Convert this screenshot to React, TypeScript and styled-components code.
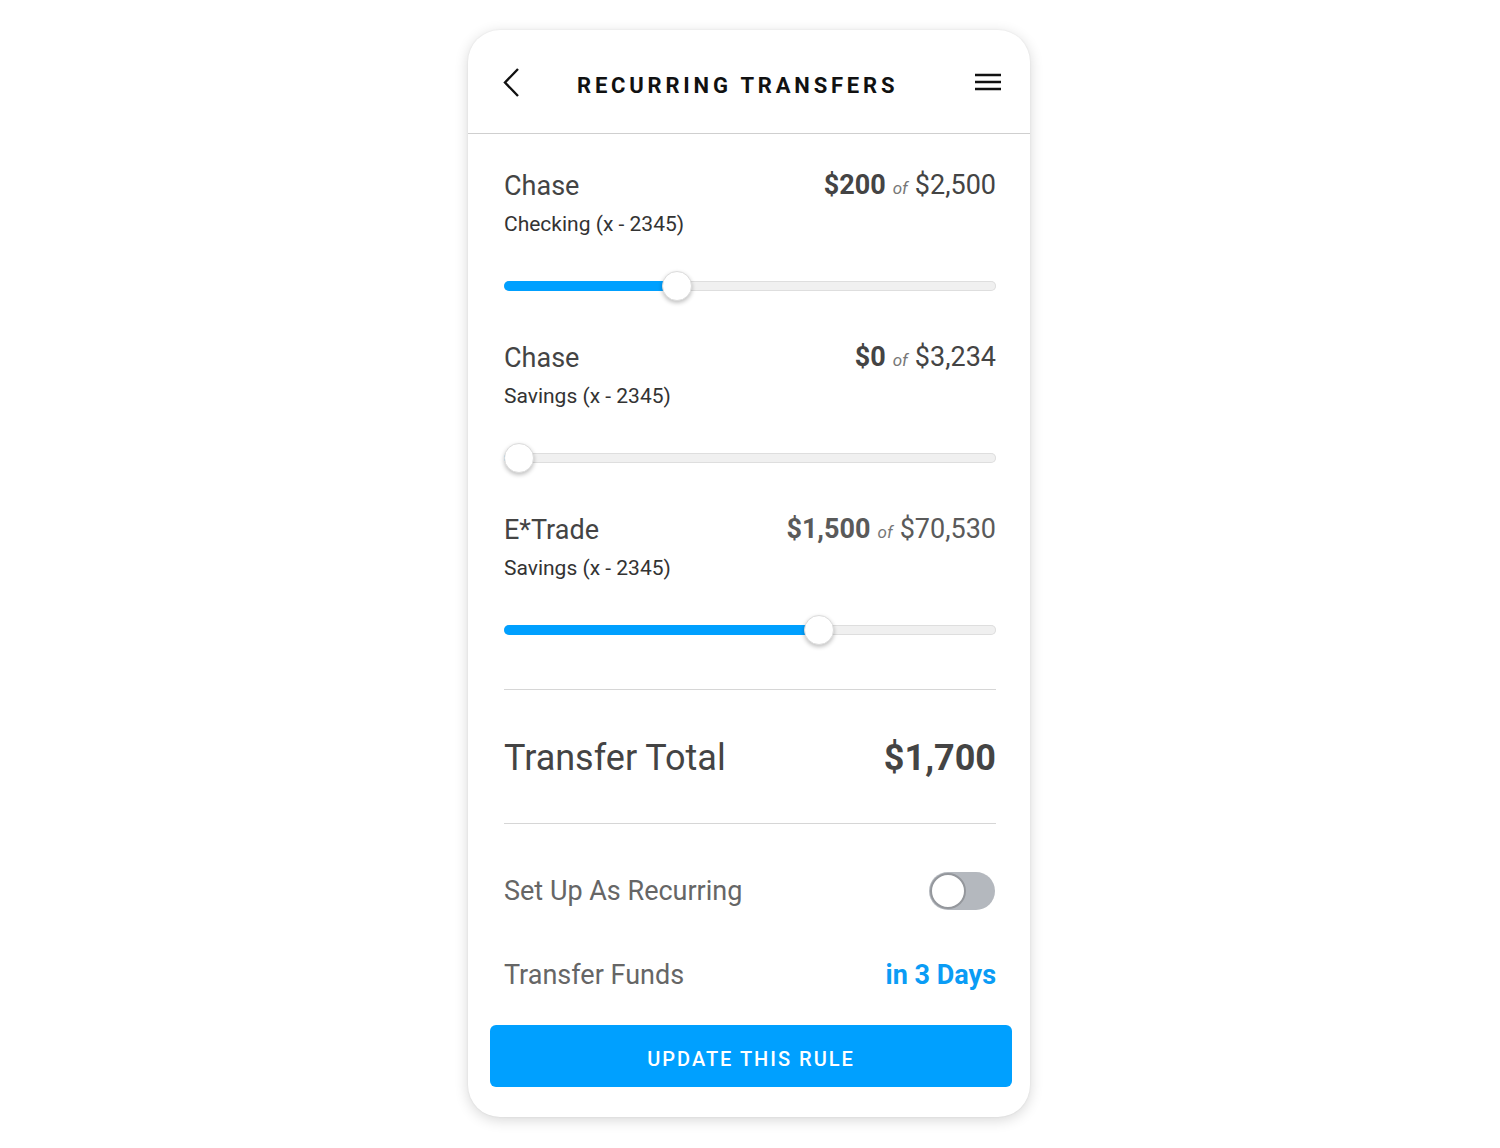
import * as React from "react";
import styled, { createGlobalStyle } from "styled-components";

const GlobalStyle = createGlobalStyle`
	body {
		margin: 0;
		background: #ffffff;
		font-family: Roboto, "Liberation Sans", Arial, sans-serif;
	}
`;

interface Account {
	bank: string;
	kind: string;
	amount: string;
	total: string;
	share: number;
	muted?: boolean;
}

const accounts: Account[] = [
	{ bank: "Chase", kind: "Checking (x - 2345)", amount: "$200", total: "$2,500", share: 0.342 },
	{ bank: "Chase", kind: "Savings (x - 2345)", amount: "$0", total: "$3,234", share: 0 },
	{ bank: "E*Trade", kind: "Savings (x - 2345)", amount: "$1,500", total: "$70,530", share: 0.649, muted: true },
];

// thumb is 30px, so its center travels over (track - 30px)
const thumbLeft = (share: number) => `calc((100% - 30px) * ${share})`;

export default function App(): JSX.Element {
	return (
		<>
			<GlobalStyle />
			<Page>
				<Card>
					<Header>
						<IconButton aria-label="Back">
							<svg width="20" height="30" viewBox="0 0 20 30">
								<polyline points="16,2 3,15.5 16,29" fill="none" stroke="#111" strokeWidth="2.4" />
							</svg>
						</IconButton>
						<Title>RECURRING TRANSFERS</Title>
						<IconButton aria-label="Menu">
							<svg width="28" height="18" viewBox="0 0 28 18">
								<line x1="1" y1="2" x2="27" y2="2" stroke="#111" strokeWidth="2.4" />
								<line x1="1" y1="9" x2="27" y2="9" stroke="#111" strokeWidth="2.4" />
								<line x1="1" y1="16" x2="27" y2="16" stroke="#111" strokeWidth="2.4" />
							</svg>
						</IconButton>
					</Header>

					<Body>
						{accounts.map((a, i) => (
							<AccountBlock key={i}>
								<AccountTop>
									<div>
										<Bank>{a.bank}</Bank>
										<Kind>{a.kind}</Kind>
									</div>
									<Amount $muted={a.muted}>
										<strong>{a.amount}</strong>
										<Of>of</Of>
										<span>{a.total}</span>
									</Amount>
								</AccountTop>
								<Track>
									<Fill style={{ width: `calc(${thumbLeft(a.share)} + 15px)` }} />
									<Thumb style={{ left: thumbLeft(a.share) }} />
								</Track>
							</AccountBlock>
						))}

						<Divider />
						<TotalRow>
							<TotalLabel>Transfer Total</TotalLabel>
							<TotalValue>$1,700</TotalValue>
						</TotalRow>
						<Divider />

						<OptionRow $height={134}>
							<OptionLabel>Set Up As Recurring</OptionLabel>
							<Toggle>
								<ToggleKnob />
							</Toggle>
						</OptionRow>
						<OptionRow $height={34}>
							<OptionLabel>Transfer Funds</OptionLabel>
							<Days>in 3 Days</Days>
						</OptionRow>
					</Body>

					<Footer>
						<PrimaryButton>UPDATE THIS RULE</PrimaryButton>
					</Footer>
				</Card>
			</Page>
		</>
	);
}

const Page = styled.div`
	width: 1500px;
	height: 1148px;
	display: flex;
	padding: 30px 0 0 468px;
	box-sizing: border-box;
`;

const Card = styled.div`
	width: 562px;
	height: 1087px;
	background: #fff;
	border-radius: 32px;
	box-shadow: 0 3px 14px rgba(0, 0, 0, 0.16), 0 0 2px rgba(0, 0, 0, 0.08);
	display: flex;
	flex-direction: column;
	overflow: hidden;
`;

const Header = styled.div`
	height: 103px;
	border-bottom: 1px solid #cfcfcf;
	display: flex;
	align-items: center;
	padding: 0 28px 0 34px;
	box-sizing: content-box;
`;

const IconButton = styled.div`
	display: flex;
	align-items: center;
	justify-content: center;
`;

const Title = styled.div`
	flex: 1;
	font-size: 22px;
	font-weight: 700;
	letter-spacing: 3.8px;
	color: #111;
	margin-left: 55px;
	padding-top: 8px;
`;

const Body = styled.div`
	padding: 37px 34px 0 36px;
	display: flex;
	flex-direction: column;
	flex: 1;
`;

const AccountBlock = styled.div`
	display: flex;
	flex-direction: column;
	margin-bottom: 42px;

	&:nth-of-type(3) {
		margin-bottom: 44px;
	}
`;

const AccountTop = styled.div`
	display: flex;
	justify-content: space-between;
	align-items: flex-start;
	margin-bottom: 35px;
`;

const Bank = styled.div`
	font-size: 27px;
	line-height: 30px;
	color: #444;
	margin-bottom: 11px;
`;

const Kind = styled.div`
	font-size: 21px;
	line-height: 24px;
	color: #333;
`;

const Amount = styled.div<{ $muted?: boolean }>`
	font-size: 27px;
	line-height: 28px;
	color: ${(p) => (p.$muted ? "#5a5a5a" : "#444")};
	display: flex;
	align-items: baseline;

	strong {
		font-weight: 700;
	}
`;

const Of = styled.span`
	font-size: 17px;
	font-style: italic;
	color: #777;
	margin: 0 7px;
`;

const Track = styled.div`
	position: relative;
	height: 30px;

	&::before {
		content: "";
		position: absolute;
		left: 0;
		right: 0;
		top: 10px;
		height: 10px;
		border-radius: 5px;
		background: #f0f0f0;
		box-shadow: inset 0 0 0 1px #dedede;
	}
`;

const Fill = styled.div`
	position: absolute;
	left: 0;
	top: 10px;
	height: 10px;
	border-radius: 5px;
	background: #00a0ff;
`;

const Thumb = styled.div`
	position: absolute;
	top: 0;
	width: 30px;
	height: 30px;
	border-radius: 50%;
	background: #fff;
	border: 1px solid #dcdcdc;
	box-sizing: border-box;
	box-shadow: 0 2px 4px rgba(0, 0, 0, 0.25);
`;

const Divider = styled.div`
	height: 1px;
	background: #d6d6d6;
`;

const TotalRow = styled.div`
	height: 133px;
	display: flex;
	align-items: center;
	justify-content: space-between;
`;

const TotalLabel = styled.div`
	font-size: 36px;
	color: #444;
	padding-top: 2px;
`;

const TotalValue = styled.div`
	font-size: 36px;
	font-weight: 700;
	color: #444;
	padding-top: 2px;
`;

const OptionRow = styled.div<{ $height: number }>`
	height: ${(p) => p.$height}px;
	display: flex;
	align-items: center;
	justify-content: space-between;
`;

const OptionLabel = styled.div`
	font-size: 27px;
	color: #666;
`;

const Days = styled.div`
	font-size: 27px;
	font-weight: 700;
	color: #0a9cf5;
`;

const Toggle = styled.div`
	position: relative;
	width: 66px;
	height: 38px;
	border-radius: 19px;
	background: #b4b8be;
	margin-right: 1px;
`;

const ToggleKnob = styled.div`
	position: absolute;
	left: 1px;
	top: 1px;
	width: 36px;
	height: 36px;
	border-radius: 50%;
	background: #fff;
	border: 2px solid #94979c;
	box-sizing: border-box;
`;

const Footer = styled.div`
	padding: 0 18px 30px 22px;
`;

const PrimaryButton = styled.button`
	width: 100%;
	height: 62px;
	padding-top: 6px;
	border: none;
	border-radius: 6px;
	background: #00a0ff;
	color: #fff;
	font-family: Roboto, "Liberation Sans", Arial, sans-serif;
	font-size: 20px;
	font-weight: 500;
	letter-spacing: 2px;
`;
